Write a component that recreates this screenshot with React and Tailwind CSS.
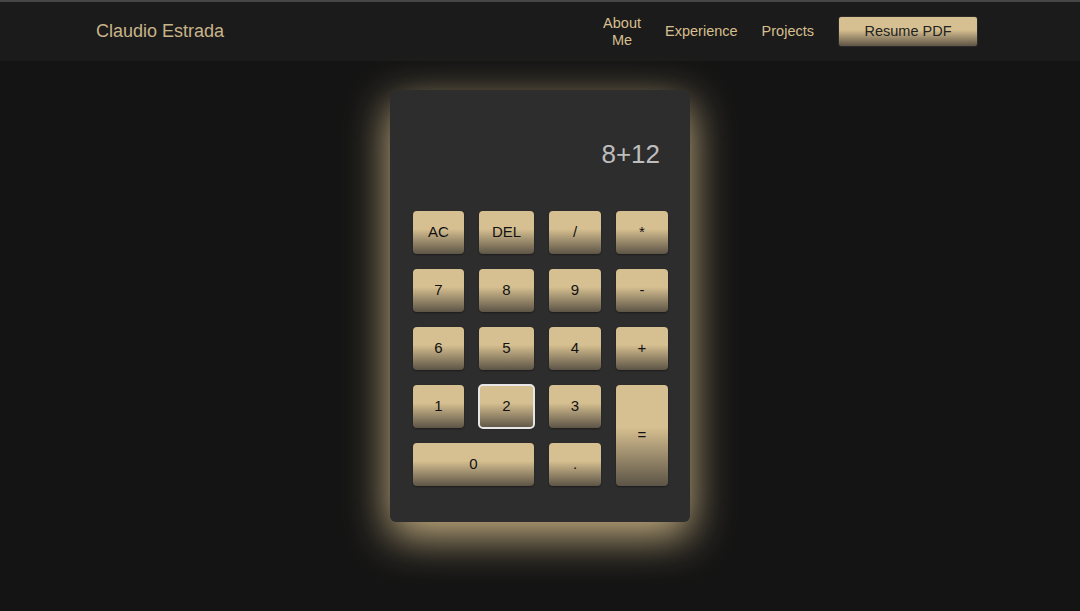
import { useState } from 'react'

const btnBase =
  'flex items-center justify-center rounded-[4px] bg-[linear-gradient(to_bottom,#d6bf90_42%,#5c5446_100%)] text-[15px] text-[#111] shadow-[0_1px_2px_rgba(0,0,0,0.4)]'

const keys = [
  { label: 'AC' },
  { label: 'DEL' },
  { label: '/' },
  { label: '*' },
  { label: '7' },
  { label: '8' },
  { label: '9' },
  { label: '-' },
  { label: '6' },
  { label: '5' },
  { label: '4' },
  { label: '+' },
  { label: '1' },
  { label: '2', focus: true },
  { label: '3' },
  { label: '=', cls: 'row-span-2' },
  { label: '0', cls: 'col-span-2' },
  { label: '.' },
]

function Header() {
  return (
    <header className="flex h-[61px] items-center justify-between border-t-2 border-[#464646] bg-[#1b1b1b] pl-[96px] pr-[102px]">
      <span className="text-[18px] text-[#c9b48a]">Claudio Estrada</span>
      <nav className="flex items-center gap-6 text-[14.5px] text-[#d7bf8f]">
        <a className="w-[38px] text-center leading-[17px]">About Me</a>
        <a>Experience</a>
        <a>Projects</a>
        <button className="h-[31px] w-[140px] rounded-[3px] border border-[#2a2a2a] bg-[linear-gradient(to_bottom,#d6bf90_45%,#5e5446_100%)] text-[14.5px] text-[#222]">
          Resume PDF
        </button>
      </nav>
    </header>
  )
}

export default function App() {
  const [expr] = useState('8+12')

  return (
    <div className="min-h-screen bg-[#141414] font-['Liberation_Sans',Arial,sans-serif]">
      <Header />
      <main className="flex justify-center pt-[29px]">
        <div className="h-[432px] w-[300px] rounded-[6px] bg-[#2d2d2d] pl-[23px] pr-[22px] shadow-[0_14px_44px_rgba(214,190,140,0.95)]">
          <div className="flex h-[121px] items-center justify-end pr-[8px] pt-[8px] text-[26px] text-[#bdbdbd]">
            {expr}
          </div>
          <div className="grid grid-cols-[51px_55px_52px_52px] grid-rows-[43px_43px_43px_43px_43px] gap-x-[15px] gap-y-[15px]">
            {keys.map((k) => (
              <button
                key={k.label}
                className={`${btnBase} ${k.cls || ''} ${
                  k.focus ? 'outline-2 outline-[#e6e6e6] -outline-offset-1' : ''
                }`}
              >
                {k.label}
              </button>
            ))}
          </div>
        </div>
      </main>
    </div>
  )
}
